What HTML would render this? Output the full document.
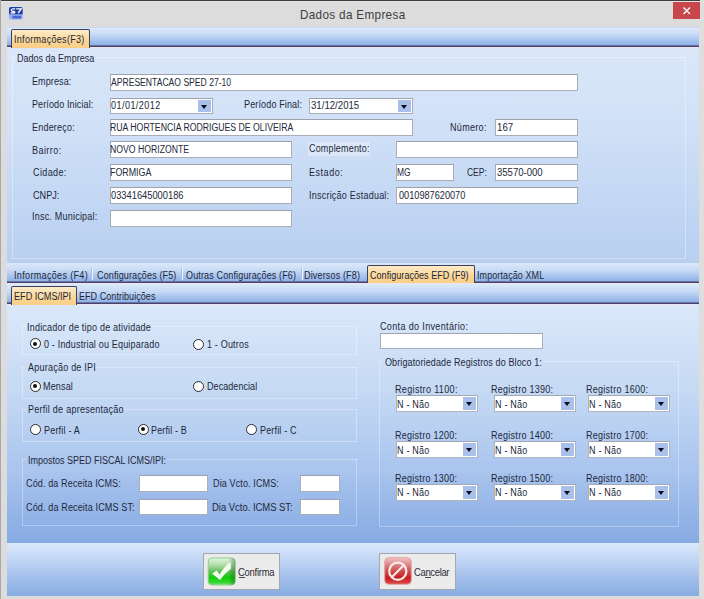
<!DOCTYPE html>
<html><head><meta charset="utf-8"><style>
*{margin:0;padding:0;box-sizing:border-box}
html,body{width:704px;height:599px;overflow:hidden;background:#dcdcdc}
body{position:relative;font-family:"Liberation Sans",sans-serif;font-size:10px;color:#1c1c2a}
.a{position:absolute}
.t{position:absolute;white-space:nowrap}
.i{position:absolute;background:#fff;border:1px solid #a9aeb6;border-top-color:#9da2aa}
.i2{position:absolute;background:#fff;border:1px solid #a7afbb;border-top-color:#9ca3ae}
.c{position:absolute;background:#fff;border:1px solid #a9aeb6;border-top-color:#9da2aa}
.c2{position:absolute;background:#fff;border:1px solid #adb5c1;border-top-color:#a2a9b4}
.c b,.c2 b{position:absolute;right:1px;top:1px;bottom:1px;width:13px;background:#a9c0ea}
.c b:after,.c2 b:after{content:"";position:absolute;left:3px;top:5px;border-left:3.5px solid transparent;border-right:3.5px solid transparent;border-top:4px solid #0a0a1a}
.strip{position:absolute;left:7px;width:692px;background:linear-gradient(#dde9fb,#c7daf5 40%,#8fb2e8)}
.dl{position:absolute;left:7px;width:692px;height:2px;background:linear-gradient(#6a73a3 50%,#47446a 50%)}
.ll{position:absolute;left:7px;width:692px;height:1px;background:#ebe6ef}
.sel{position:absolute;background:linear-gradient(#fdebc8,#fbd696 60%,#f9cd86);border:1px solid #3f3e5e;border-bottom:none;border-radius:2px 2px 0 0}
.sep{position:absolute;width:1px;background:#a9c0e6;box-shadow:1px 0 0 #eef4fd}
.grp{position:absolute;border:1px solid rgba(255,255,255,.55)}
.rad{position:absolute;width:11px;height:11px;border-radius:50%;background:#fff;border:1.3px solid #2a2a2a}
.rad.on:after{content:"";position:absolute;left:2.2px;top:2.2px;width:4.2px;height:4.2px;border-radius:50%;background:#111}
.btn{position:absolute;background:#ebebeb;border:1px solid #a3a7ae}
</style></head><body>
<div class="a" style="left:0;top:0;width:704px;height:1px;background:#3c3c3c"></div>
<div class="a" style="left:1px;top:1px;width:703px;height:1px;background:#e6e6e6"></div>
<div class="a" style="left:0;top:0;width:1px;height:599px;background:#a8a8a8"></div>
<div class="a" style="left:700px;top:0;width:4px;height:599px;background:#dedede"></div>
<div class="a" style="left:673px;top:2px;width:27px;height:17px;background:#c8474b"></div>
<svg class="a" style="left:673px;top:2px" width="27" height="17"><path d="M10.5 5.5 L17 12 M17 5.5 L10.5 12" stroke="#fff" stroke-width="1.35"/></svg>
<svg class="a" style="left:8px;top:6px" width="16" height="15" viewBox="0 0 16 15">
<rect x="1" y="1" width="13.6" height="12.6" rx="2.2" fill="#8eaef0"/>
<path d="M1 3.2 Q1 1 3.2 1 L12.4 1 Q14.6 1 14.6 3.2 L14.6 8.2 L1 8.2 Z" fill="#1f3b9f"/>
<path d="M7.2 2.9 Q3.2 2.4 3.3 4.3 Q3.4 5.4 5.6 5.5 Q7.3 5.7 6.6 6.9 L2.6 7" stroke="#fff" stroke-width="1.3" fill="none"/>
<path d="M8.2 2.9 L13.2 2.9 L10.2 7" stroke="#fff" stroke-width="1.3" fill="none"/>
<path d="M4.5 9.8 L13 9.8 L13 12.5 L4.5 12.5 Z" fill="#3a58c8" opacity=".8"/>
</svg>
<div class="a" style="left:7px;top:27px;width:692px;height:569px;background:#c9dcf4"></div>
<div class="strip" style="top:28px;height:17px"></div>
<div class="dl" style="top:45px"></div>
<div class="ll" style="top:47px"></div>
<div class="sel" style="left:11px;top:29px;width:79px;height:19px"></div>
<div class="a" style="left:7px;top:48px;width:692px;height:215px;background:linear-gradient(#dbe7f9,#cfe0f7 40%,#b8cff0)"></div>
<div class="a" style="left:12px;top:57px;width:674px;height:202px;border:1px solid rgba(255,255,255,.35);border-top:none"></div>
<div class="a" style="left:12px;top:57px;width:4px;height:1px;background:rgba(255,255,255,.35)"></div>
<div class="a" style="left:96px;top:57px;width:590px;height:1px;background:rgba(255,255,255,.35)"></div>
<div class="a" style="left:308px;top:142px;width:62px;height:14px;background:#dce8f8"></div>
<div class="i" style="left:110px;top:74px;width:468px;height:17px"></div>
<div class="c" style="left:110px;top:98px;width:103px;height:16px"><b></b></div>
<div class="c" style="left:309px;top:98px;width:104px;height:16px"><b></b></div>
<div class="i" style="left:110px;top:119px;width:303px;height:17px"></div>
<div class="i" style="left:495px;top:119px;width:83px;height:17px"></div>
<div class="i" style="left:110px;top:141px;width:182px;height:17px"></div>
<div class="i" style="left:396px;top:141px;width:182px;height:17px"></div>
<div class="i" style="left:110px;top:164px;width:182px;height:17px"></div>
<div class="i" style="left:396px;top:164px;width:58px;height:17px"></div>
<div class="i" style="left:495px;top:164px;width:83px;height:17px"></div>
<div class="i" style="left:110px;top:187px;width:182px;height:17px"></div>
<div class="i" style="left:396px;top:187px;width:182px;height:17px"></div>
<div class="i" style="left:110px;top:210px;width:182px;height:17px"></div>
<div class="strip" style="top:263px;height:18px"></div>
<div class="dl" style="top:281px"></div>
<div class="ll" style="top:283px"></div>
<div class="sep" style="left:91px;top:267px;height:13px"></div>
<div class="sep" style="left:181px;top:267px;height:13px"></div>
<div class="sep" style="left:301px;top:267px;height:13px"></div>
<div class="sel" style="left:367px;top:265px;width:108px;height:18px"></div>
<div class="strip" style="top:284px;height:18px"></div>
<div class="dl" style="top:302px"></div>
<div class="ll" style="top:304px"></div>
<div class="sel" style="left:11px;top:286px;width:66px;height:19px"></div>
<div class="a" style="left:7px;top:305px;width:692px;height:238px;background:linear-gradient(#dbe8fa,#c6daf4 35%,#a9c4ee 70%,#86aae2)"></div>
<div class="a" style="left:22px;top:326px;width:335px;height:29px;border:1px solid rgba(255,255,255,.32);border-top:none"></div><div class="a" style="left:22px;top:326px;width:4px;height:1px;background:rgba(255,255,255,.32)"></div><div class="a" style="left:153px;top:326px;width:204px;height:1px;background:rgba(255,255,255,.32)"></div>
<div class="a" style="left:22px;top:367px;width:335px;height:32px;border:1px solid rgba(255,255,255,.32);border-top:none"></div><div class="a" style="left:22px;top:367px;width:4px;height:1px;background:rgba(255,255,255,.32)"></div><div class="a" style="left:97px;top:367px;width:260px;height:1px;background:rgba(255,255,255,.32)"></div>
<div class="a" style="left:22px;top:409px;width:335px;height:33px;border:1px solid rgba(255,255,255,.32);border-top:none"></div><div class="a" style="left:22px;top:409px;width:4px;height:1px;background:rgba(255,255,255,.32)"></div><div class="a" style="left:124px;top:409px;width:233px;height:1px;background:rgba(255,255,255,.32)"></div>
<div class="a" style="left:22px;top:459px;width:335px;height:67px;border:1px solid rgba(255,255,255,.32);border-top:none"></div><div class="a" style="left:22px;top:459px;width:4px;height:1px;background:rgba(255,255,255,.32)"></div><div class="a" style="left:167px;top:459px;width:190px;height:1px;background:rgba(255,255,255,.32)"></div>
<div class="a" style="left:379px;top:361px;width:300px;height:166px;border:1px solid rgba(255,255,255,.32);border-top:none"></div><div class="a" style="left:379px;top:361px;width:4px;height:1px;background:rgba(255,255,255,.32)"></div><div class="a" style="left:544px;top:361px;width:135px;height:1px;background:rgba(255,255,255,.32)"></div>
<div class="rad on" style="left:29.9px;top:338.4px"></div>
<div class="rad" style="left:192.8px;top:338.7px"></div>
<div class="rad on" style="left:29.9px;top:381.0px"></div>
<div class="rad" style="left:192.5px;top:380.8px"></div>
<div class="rad" style="left:29.9px;top:423.9px"></div>
<div class="rad on" style="left:137.8px;top:423.9px"></div>
<div class="rad" style="left:246.0px;top:423.9px"></div>
<div class="i2" style="left:139px;top:475px;width:69px;height:17px"></div>
<div class="i2" style="left:300px;top:475px;width:40px;height:17px"></div>
<div class="i2" style="left:139px;top:499px;width:69px;height:16px"></div>
<div class="i2" style="left:300px;top:499px;width:40px;height:16px"></div>
<div class="i2" style="left:380px;top:333px;width:163px;height:16px"></div>
<div class="c2" style="left:396px;top:395px;width:82px;height:17px"><b></b></div>
<div class="c2" style="left:494px;top:395px;width:82px;height:17px"><b></b></div>
<div class="c2" style="left:588px;top:395px;width:82px;height:17px"><b></b></div>
<div class="c2" style="left:396px;top:441px;width:82px;height:17px"><b></b></div>
<div class="c2" style="left:494px;top:441px;width:82px;height:17px"><b></b></div>
<div class="c2" style="left:588px;top:441px;width:82px;height:17px"><b></b></div>
<div class="c2" style="left:396px;top:484px;width:82px;height:17px"><b></b></div>
<div class="c2" style="left:494px;top:484px;width:82px;height:17px"><b></b></div>
<div class="c2" style="left:588px;top:484px;width:82px;height:17px"><b></b></div>
<div class="a" style="left:7px;top:543px;width:692px;height:53px;background:linear-gradient(#dce9fc,#b9d0f2 40%,#86abe2)"></div>
<div class="btn" style="left:203px;top:553px;width:77px;height:37px"></div>
<div class="btn" style="left:379px;top:553px;width:77px;height:37px"></div>
<svg class="a" style="left:207px;top:557px" width="30" height="29" viewBox="0 0 30 29">
<defs><linearGradient id="gg" x1="0" y1="0" x2="0" y2="1"><stop offset="0" stop-color="#e6f7e2"/><stop offset=".3" stop-color="#a6d8a0"/><stop offset=".5" stop-color="#5cbf57"/><stop offset=".72" stop-color="#12cd0e"/><stop offset=".9" stop-color="#2fd82b"/><stop offset="1" stop-color="#7fe47a"/></linearGradient>
<linearGradient id="gh" x1="0" y1="0" x2="1" y2="0"><stop offset=".75" stop-color="#000" stop-opacity="0"/><stop offset="1" stop-color="#0a5a08" stop-opacity=".35"/></linearGradient></defs>
<rect x="1.2" y="1" width="27" height="27" rx="4" fill="url(#gg)" stroke="#8fcf8a" stroke-width="1"/>
<rect x="1.2" y="1" width="27" height="27" rx="4" fill="url(#gh)"/>
<path d="M5 16.5 L9.8 13.5 L12.5 17.5 Q17 9.5 23.5 5 L24 11.5 Q18 16 13 23 Z" fill="#f2fdf0"/>
</svg>
<svg class="a" style="left:384px;top:557px" width="28" height="28" viewBox="0 0 28 28">
<defs><linearGradient id="rg" x1="0" y1="0" x2="0" y2="1"><stop offset="0" stop-color="#f2c4c4"/><stop offset=".45" stop-color="#d0585a"/><stop offset=".75" stop-color="#c81e22"/><stop offset="1" stop-color="#de4a4a"/></linearGradient></defs>
<rect x="0.7" y="0.7" width="26.6" height="26.6" rx="4" fill="url(#rg)" stroke="#e2a4a6" stroke-width="1"/>
<circle cx="13.8" cy="14.2" r="8.6" fill="none" stroke="#fbeaea" stroke-width="2.2"/>
<path d="M19.5 8.5 L8 20" stroke="#fbeaea" stroke-width="2.2"/>
</svg>
<div class="a" style="left:239px;top:577px;width:6px;height:1px;background:#4a4a4a"></div>
<div class="a" style="left:425px;top:577px;width:6px;height:1px;background:#4a4a4a"></div>
<div id="tx0" class="t" style="left:300.0px;top:7px;font-size:13px;line-height:16px;letter-spacing:0.37px;transform:scaleX(0.9);transform-origin:0 0;color:#404040">Dados da Empresa</div>
<div id="tx1" class="t" style="left:14.4px;top:34px;font-size:10px;line-height:12px;letter-spacing:0.34px;transform:scaleX(0.9);transform-origin:0 0;color:#22283a">Informações(F3)</div>
<div id="tx2" class="t" style="left:17.0px;top:53px;font-size:10px;line-height:12px;letter-spacing:0.01px;transform:scaleX(0.9);transform-origin:0 0;color:#22283a">Dados da Empresa</div>
<div id="tx3" class="t" style="left:32.3px;top:76px;font-size:10px;line-height:12px;letter-spacing:0.12px;transform:scaleX(0.9);transform-origin:0 0;color:#22283a">Empresa:</div>
<div id="tx4" class="t" style="left:111.3px;top:77px;font-size:10px;line-height:12px;transform:scaleX(0.859);transform-origin:0 0;color:#22283a">APRESENTACAO SPED 27-10</div>
<div id="tx5" class="t" style="left:32.3px;top:99px;font-size:10px;line-height:12px;letter-spacing:0.13px;transform:scaleX(0.9);transform-origin:0 0;color:#22283a">Período Inicial:</div>
<div id="tx6" class="t" style="left:110.7px;top:100px;font-size:10px;line-height:12px;letter-spacing:0.52px;transform:scaleX(0.9);transform-origin:0 0;color:#22283a">01/01/2012</div>
<div id="tx7" class="t" style="left:243.8px;top:99px;font-size:10px;line-height:12px;letter-spacing:0.16px;transform:scaleX(0.9);transform-origin:0 0;color:#22283a">Período Final:</div>
<div id="tx8" class="t" style="left:310.7px;top:100px;font-size:10px;line-height:12px;transform:scaleX(0.963);transform-origin:0 0;color:#22283a">31/12/2015</div>
<div id="tx9" class="t" style="left:32.3px;top:122px;font-size:10px;line-height:12px;letter-spacing:0.23px;transform:scaleX(0.9);transform-origin:0 0;color:#22283a">Endereço:</div>
<div id="tx10" class="t" style="left:110.3px;top:122px;font-size:10px;line-height:12px;transform:scaleX(0.871);transform-origin:0 0;color:#22283a">RUA HORTENCIA RODRIGUES DE OLIVEIRA</div>
<div id="tx11" class="t" style="left:450.4px;top:122px;font-size:10px;line-height:12px;letter-spacing:0.35px;transform:scaleX(0.9);transform-origin:0 0;color:#22283a">Número:</div>
<div id="tx12" class="t" style="left:496.7px;top:122px;font-size:10px;line-height:12px;transform:scaleX(0.967);transform-origin:0 0;color:#22283a">167</div>
<div id="tx13" class="t" style="left:31.8px;top:145px;font-size:10px;line-height:12px;letter-spacing:0.49px;transform:scaleX(0.9);transform-origin:0 0;color:#22283a">Bairro:</div>
<div id="tx14" class="t" style="left:110.3px;top:144px;font-size:10px;line-height:12px;transform:scaleX(0.868);transform-origin:0 0;color:#22283a">NOVO HORIZONTE</div>
<div id="tx15" class="t" style="left:309.2px;top:143px;font-size:10px;line-height:12px;letter-spacing:0.19px;transform:scaleX(0.9);transform-origin:0 0;color:#22283a">Complemento:</div>
<div id="tx16" class="t" style="left:32.7px;top:167px;font-size:10px;line-height:12px;letter-spacing:0.42px;transform:scaleX(0.9);transform-origin:0 0;color:#22283a">Cidade:</div>
<div id="tx17" class="t" style="left:110.3px;top:167px;font-size:10px;line-height:12px;transform:scaleX(0.887);transform-origin:0 0;color:#22283a">FORMIGA</div>
<div id="tx18" class="t" style="left:308.8px;top:167px;font-size:10px;line-height:12px;letter-spacing:0.59px;transform:scaleX(0.9);transform-origin:0 0;color:#22283a">Estado:</div>
<div id="tx19" class="t" style="left:397.1px;top:167px;font-size:10px;line-height:12px;transform:scaleX(0.837);transform-origin:0 0;color:#22283a">MG</div>
<div id="tx20" class="t" style="left:467.1px;top:167px;font-size:10px;line-height:12px;transform:scaleX(0.846);transform-origin:0 0;color:#22283a">CEP:</div>
<div id="tx21" class="t" style="left:496.7px;top:167px;font-size:10px;line-height:12px;transform:scaleX(0.954);transform-origin:0 0;color:#22283a">35570-000</div>
<div id="tx22" class="t" style="left:32.7px;top:190px;font-size:10px;line-height:12px;transform:scaleX(0.911);transform-origin:0 0;color:#22283a">CNPJ:</div>
<div id="tx23" class="t" style="left:111.3px;top:190px;font-size:10px;line-height:12px;transform:scaleX(0.931);transform-origin:0 0;color:#22283a">03341645000186</div>
<div id="tx24" class="t" style="left:308.8px;top:190px;font-size:10px;line-height:12px;letter-spacing:0.25px;transform:scaleX(0.9);transform-origin:0 0;color:#22283a">Inscrição Estadual:</div>
<div id="tx25" class="t" style="left:398.8px;top:190px;font-size:10px;line-height:12px;transform:scaleX(0.917);transform-origin:0 0;color:#22283a">0010987620070</div>
<div id="tx26" class="t" style="left:31.8px;top:211px;font-size:10px;line-height:12px;letter-spacing:0.24px;transform:scaleX(0.9);transform-origin:0 0;color:#22283a">Insc. Municipal:</div>
<div id="tx27" class="t" style="left:13.9px;top:270px;font-size:10px;line-height:12px;letter-spacing:0.38px;transform:scaleX(0.9);transform-origin:0 0;color:#22283a">Informações (F4)</div>
<div id="tx28" class="t" style="left:96.9px;top:270px;font-size:10px;line-height:12px;letter-spacing:0.15px;transform:scaleX(0.9);transform-origin:0 0;color:#22283a">Configurações (F5)</div>
<div id="tx29" class="t" style="left:185.8px;top:270px;font-size:10px;line-height:12px;letter-spacing:0.16px;transform:scaleX(0.9);transform-origin:0 0;color:#22283a">Outras Configurações (F6)</div>
<div id="tx30" class="t" style="left:304.3px;top:270px;font-size:10px;line-height:12px;letter-spacing:0.18px;transform:scaleX(0.9);transform-origin:0 0;color:#22283a">Diversos (F8)</div>
<div id="tx31" class="t" style="left:370.1px;top:270px;font-size:10px;line-height:12px;letter-spacing:0.05px;transform:scaleX(0.9);transform-origin:0 0;color:#22283a">Configurações EFD (F9)</div>
<div id="tx32" class="t" style="left:477.4px;top:270px;font-size:10px;line-height:12px;letter-spacing:0.10px;transform:scaleX(0.9);transform-origin:0 0;color:#22283a">Importação XML</div>
<div id="tx33" class="t" style="left:13.8px;top:291px;font-size:10px;line-height:12px;transform:scaleX(0.910);transform-origin:0 0;color:#22283a">EFD ICMS/IPI</div>
<div id="tx34" class="t" style="left:79.2px;top:291px;font-size:10px;line-height:12px;letter-spacing:0.06px;transform:scaleX(0.9);transform-origin:0 0;color:#22283a">EFD Contribuições</div>
<div id="tx35" class="t" style="left:27.3px;top:322px;font-size:10px;line-height:12px;letter-spacing:0.24px;transform:scaleX(0.9);transform-origin:0 0;color:#22283a">Indicador de tipo de atividade</div>
<div id="tx36" class="t" style="left:44.1px;top:339px;font-size:10px;line-height:12px;letter-spacing:0.20px;transform:scaleX(0.9);transform-origin:0 0;color:#22283a">0 - Industrial ou Equiparado</div>
<div id="tx37" class="t" style="left:207.4px;top:339px;font-size:10px;line-height:12px;letter-spacing:0.20px;transform:scaleX(0.9);transform-origin:0 0;color:#22283a">1 - Outros</div>
<div id="tx38" class="t" style="left:28.2px;top:362px;font-size:10px;line-height:12px;letter-spacing:0.26px;transform:scaleX(0.9);transform-origin:0 0;color:#22283a">Apuração de IPI</div>
<div id="tx39" class="t" style="left:43.2px;top:381px;font-size:10px;line-height:12px;letter-spacing:0.19px;transform:scaleX(0.9);transform-origin:0 0;color:#22283a">Mensal</div>
<div id="tx40" class="t" style="left:207.0px;top:381px;font-size:10px;line-height:12px;letter-spacing:0.07px;transform:scaleX(0.9);transform-origin:0 0;color:#22283a">Decadencial</div>
<div id="tx41" class="t" style="left:28.0px;top:404px;font-size:10px;line-height:12px;letter-spacing:0.29px;transform:scaleX(0.9);transform-origin:0 0;color:#22283a">Perfil de apresentação</div>
<div id="tx42" class="t" style="left:43.9px;top:425px;font-size:10px;line-height:12px;letter-spacing:0.22px;transform:scaleX(0.9);transform-origin:0 0;color:#22283a">Perfil - A</div>
<div id="tx43" class="t" style="left:151.3px;top:425px;font-size:10px;line-height:12px;letter-spacing:0.16px;transform:scaleX(0.9);transform-origin:0 0;color:#22283a">Perfil - B</div>
<div id="tx44" class="t" style="left:259.8px;top:425px;font-size:10px;line-height:12px;letter-spacing:0.18px;transform:scaleX(0.9);transform-origin:0 0;color:#22283a">Perfil - C</div>
<div id="tx45" class="t" style="left:27.9px;top:455px;font-size:10px;line-height:12px;transform:scaleX(0.899);transform-origin:0 0;color:#22283a">Impostos SPED FISCAL ICMS/IPI:</div>
<div id="tx46" class="t" style="left:25.8px;top:478px;font-size:10px;line-height:12px;letter-spacing:0.15px;transform:scaleX(0.9);transform-origin:0 0;color:#22283a">Cód. da Receita ICMS:</div>
<div id="tx47" class="t" style="left:212.5px;top:478px;font-size:10px;line-height:12px;letter-spacing:0.14px;transform:scaleX(0.9);transform-origin:0 0;color:#22283a">Dia Vcto. ICMS:</div>
<div id="tx48" class="t" style="left:25.8px;top:502px;font-size:10px;line-height:12px;letter-spacing:0.17px;transform:scaleX(0.9);transform-origin:0 0;color:#22283a">Cód. da Receita ICMS ST:</div>
<div id="tx49" class="t" style="left:212.4px;top:502px;font-size:10px;line-height:12px;transform:scaleX(0.943);transform-origin:0 0;color:#22283a">Dia Vcto. ICMS ST:</div>
<div id="tx50" class="t" style="left:380.3px;top:321px;font-size:10px;line-height:12px;letter-spacing:0.40px;transform:scaleX(0.9);transform-origin:0 0;color:#22283a">Conta do Inventário:</div>
<div id="tx51" class="t" style="left:385.1px;top:357px;font-size:10px;line-height:12px;letter-spacing:0.13px;transform:scaleX(0.9);transform-origin:0 0;color:#22283a">Obrigatoriedade Registros do Bloco 1:</div>
<div id="tx52" class="t" style="left:238.2px;top:566px;font-size:10.5px;line-height:13px;letter-spacing:-0.28px;transform:scaleX(0.9);transform-origin:0 0;color:#2e2e34">Confirma</div>
<div id="tx53" class="t" style="left:413.8px;top:566px;font-size:10.5px;line-height:13px;letter-spacing:-0.37px;transform:scaleX(0.9);transform-origin:0 0;color:#2e2e34">Cancelar</div>
<div id="tx54" class="t" style="left:394.8px;top:384px;font-size:10px;line-height:12px;letter-spacing:0.39px;transform:scaleX(0.9);transform-origin:0 0;color:#22283a">Registro 1100:</div>
<div id="tx55" class="t" style="left:396.8px;top:399px;font-size:10px;line-height:12px;letter-spacing:0.24px;transform:scaleX(0.9);transform-origin:0 0;color:#22283a">N - Não</div>
<div id="tx56" class="t" style="left:491.3px;top:384px;font-size:10px;line-height:12px;letter-spacing:0.30px;transform:scaleX(0.9);transform-origin:0 0;color:#22283a">Registro 1390:</div>
<div id="tx57" class="t" style="left:494.8px;top:399px;font-size:10px;line-height:12px;letter-spacing:0.24px;transform:scaleX(0.9);transform-origin:0 0;color:#22283a">N - Não</div>
<div id="tx58" class="t" style="left:585.8px;top:384px;font-size:10px;line-height:12px;letter-spacing:0.30px;transform:scaleX(0.9);transform-origin:0 0;color:#22283a">Registro 1600:</div>
<div id="tx59" class="t" style="left:588.8px;top:399px;font-size:10px;line-height:12px;letter-spacing:0.24px;transform:scaleX(0.9);transform-origin:0 0;color:#22283a">N - Não</div>
<div id="tx60" class="t" style="left:394.8px;top:430px;font-size:10px;line-height:12px;letter-spacing:0.30px;transform:scaleX(0.9);transform-origin:0 0;color:#22283a">Registro 1200:</div>
<div id="tx61" class="t" style="left:396.8px;top:445px;font-size:10px;line-height:12px;letter-spacing:0.24px;transform:scaleX(0.9);transform-origin:0 0;color:#22283a">N - Não</div>
<div id="tx62" class="t" style="left:491.3px;top:430px;font-size:10px;line-height:12px;letter-spacing:0.30px;transform:scaleX(0.9);transform-origin:0 0;color:#22283a">Registro 1400:</div>
<div id="tx63" class="t" style="left:494.8px;top:445px;font-size:10px;line-height:12px;letter-spacing:0.24px;transform:scaleX(0.9);transform-origin:0 0;color:#22283a">N - Não</div>
<div id="tx64" class="t" style="left:585.8px;top:430px;font-size:10px;line-height:12px;letter-spacing:0.30px;transform:scaleX(0.9);transform-origin:0 0;color:#22283a">Registro 1700:</div>
<div id="tx65" class="t" style="left:588.8px;top:445px;font-size:10px;line-height:12px;letter-spacing:0.24px;transform:scaleX(0.9);transform-origin:0 0;color:#22283a">N - Não</div>
<div id="tx66" class="t" style="left:394.8px;top:473px;font-size:10px;line-height:12px;letter-spacing:0.30px;transform:scaleX(0.9);transform-origin:0 0;color:#22283a">Registro 1300:</div>
<div id="tx67" class="t" style="left:396.8px;top:487px;font-size:10px;line-height:12px;letter-spacing:0.24px;transform:scaleX(0.9);transform-origin:0 0;color:#22283a">N - Não</div>
<div id="tx68" class="t" style="left:491.3px;top:473px;font-size:10px;line-height:12px;letter-spacing:0.30px;transform:scaleX(0.9);transform-origin:0 0;color:#22283a">Registro 1500:</div>
<div id="tx69" class="t" style="left:494.8px;top:487px;font-size:10px;line-height:12px;letter-spacing:0.24px;transform:scaleX(0.9);transform-origin:0 0;color:#22283a">N - Não</div>
<div id="tx70" class="t" style="left:585.8px;top:473px;font-size:10px;line-height:12px;letter-spacing:0.30px;transform:scaleX(0.9);transform-origin:0 0;color:#22283a">Registro 1800:</div>
<div id="tx71" class="t" style="left:588.8px;top:487px;font-size:10px;line-height:12px;letter-spacing:0.24px;transform:scaleX(0.9);transform-origin:0 0;color:#22283a">N - Não</div>
</body></html>
